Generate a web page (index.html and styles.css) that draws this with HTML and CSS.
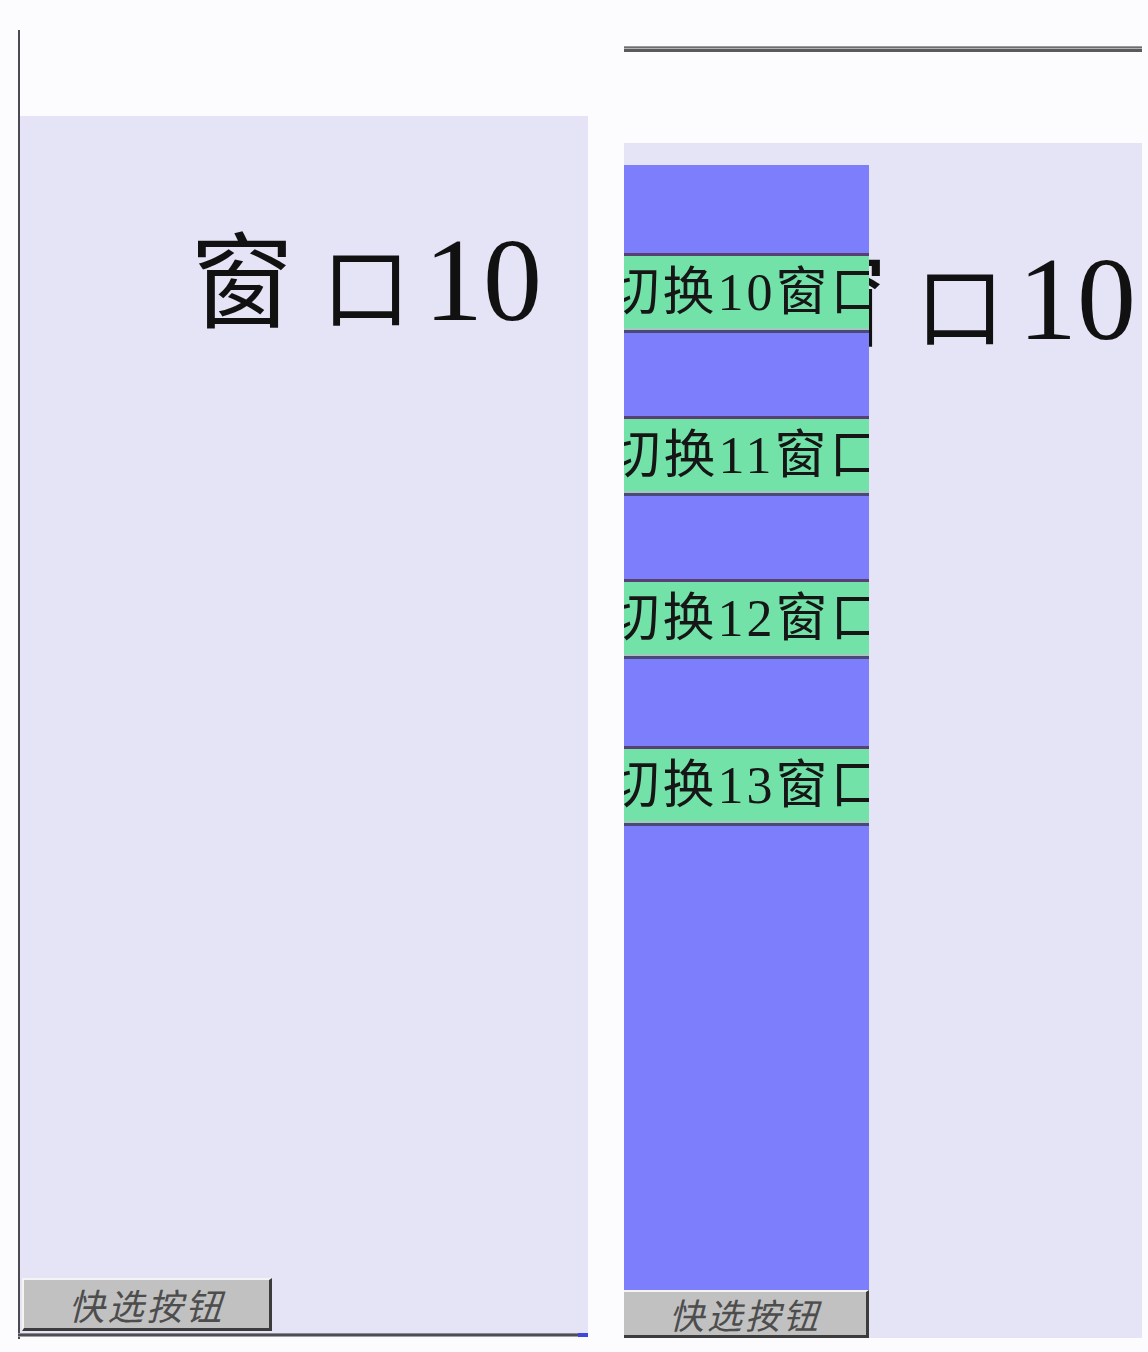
FILE: index.html
```html
<!DOCTYPE html>
<html lang="zh-CN">
<head>
<meta charset="utf-8">
<title>窗口10</title>
<link rel="stylesheet" href="styles.css">
</head>
<body>
  <div class="col col-left">
    <div class="gap-top"></div>
    <div class="panel panel-left">
      <div class="title"><span class="c1">窗</span><span class="c2">口</span><span class="num">10</span></div>
      <div class="fill"></div>
      <div class="quick quick-left">快选按钮</div>
    </div>
    <div class="base-line"><span class="tip"></span></div>
  </div>
  <div class="col col-right">
    <div class="rule"></div>
    <div class="panel panel-right">
      <div class="stack">
        <div class="title title-right"><span class="c1">窗</span><span class="c2">口</span><span class="num">10</span></div>
        <div class="menu-col">
          <div class="sidebar">
            <div class="switch first">切换10窗口</div>
            <div class="switch">切换11窗口</div>
            <div class="switch">切换12窗口</div>
            <div class="switch last">切换13窗口</div>
          </div>
          <div class="quick quick-right">快选按钮</div>
        </div>
      </div>
    </div>
  </div>
</body>
</html>
```

FILE: styles.css
```css
html, body {
  margin: 0;
  padding: 0;
}
body {
  background: #fcfbfe;
  width: 1148px;
  height: 1352px;
  display: flex;
  align-items: flex-start;
  font-family: "Liberation Serif", "Noto Sans CJK SC", serif;
  overflow: hidden;
}

.col {
  display: flex;
  flex-direction: column;
}

/* ---------- left column ---------- */
.col-left {
  margin-left: 18px;
  margin-top: 30px;
  width: 568px;
  border-left: 2px solid #4a4a50;
  height: 1309px;
}
.gap-top {
  height: 86px;
}
.panel {
  background: #e5e4f7;
}
.panel-left {
  height: 1217px;
  display: flex;
  flex-direction: column;
}
.fill {
  flex: 1;
}
.base-line {
  height: 4px;
  margin-left: -2px;
  background: linear-gradient(#8a8a8e 0, #8a8a8e 1px, #4e4e52 1px, #4e4e52 3px, #a0a0a4 3px);
  display: flex;
  justify-content: flex-end;
}
.tip {
  width: 10px;
  height: 4px;
  background: #3d46e0;
}

.title {
  font-size: 104px;
  line-height: 1;
  color: #111;
  padding-left: 170px;
  padding-top: 106px;
  white-space: nowrap;
}
.title .c1 {
  margin-right: 28px;
}
.title .c2 {
  font-size: 88px;
  margin-right: 14px;
}
.title .num {
  font-size: 118px;
}

/* ---------- buttons ---------- */
.quick {
  background: #c1c1c1;
  border-top: 2px solid #f4f4f4;
  border-left: 2px solid #f4f4f4;
  border-right: 3px solid #3c3c3c;
  border-bottom: 3px solid #3c3c3c;
  box-sizing: border-box;
  display: flex;
  align-items: center;
  justify-content: center;
  font-family: "Noto Sans CJK SC", sans-serif;
  font-style: italic;
  font-size: 36px;
  color: #4d4d4d;
  letter-spacing: 3px;
}
.quick-left {
  width: 250px;
  height: 53px;
  margin-left: 2px;
  margin-bottom: 2px;
}

/* ---------- right column ---------- */
.col-right {
  margin-left: 36px;
  margin-top: 46px;
  width: 518px;
}
.rule {
  height: 6px;
  background: linear-gradient(#9a9a9c 0, #9a9a9c 1px, #6c6c6e 1px, #6c6c6e 2px, #b4b4b6 2px, #b4b4b6 3px, #5a5a5c 3px);
}
.panel-right {
  margin-top: 91px;
  height: 1195px;
}
.stack {
  display: grid;
  height: 100%;
}
.stack > * {
  grid-area: 1 / 1;
}
.title-right {
  padding-left: 160px;
  padding-top: 98px;
}
.menu-col {
  padding-top: 22px;
  display: flex;
  flex-direction: column;
  width: 245px;
  z-index: 1;
}
.sidebar {
  background: #7d7efb;
  height: 1125px;
  display: flex;
  flex-direction: column;
}
.switch {
  height: 80px;
  box-sizing: border-box;
  margin-top: 83px;
  background: #72e2a9;
  border-top: 3px solid #5a3f72;
  border-bottom: 3px solid #4a4a78;
  box-shadow: inset 0 -2px 0 #a6c7c0;
  display: flex;
  align-items: center;
  justify-content: center;
  overflow: hidden;
  white-space: nowrap;
  font-size: 52px;
  line-height: 1;
  color: #161616;
  letter-spacing: 3px;
}
.switch.first {
  margin-top: 88px;
}
.switch.last {
  margin-top: 87px;
}
.quick-right {
  width: 245px;
  height: 48px;
  font-size: 35px;
  border-left-width: 0;
}
```
